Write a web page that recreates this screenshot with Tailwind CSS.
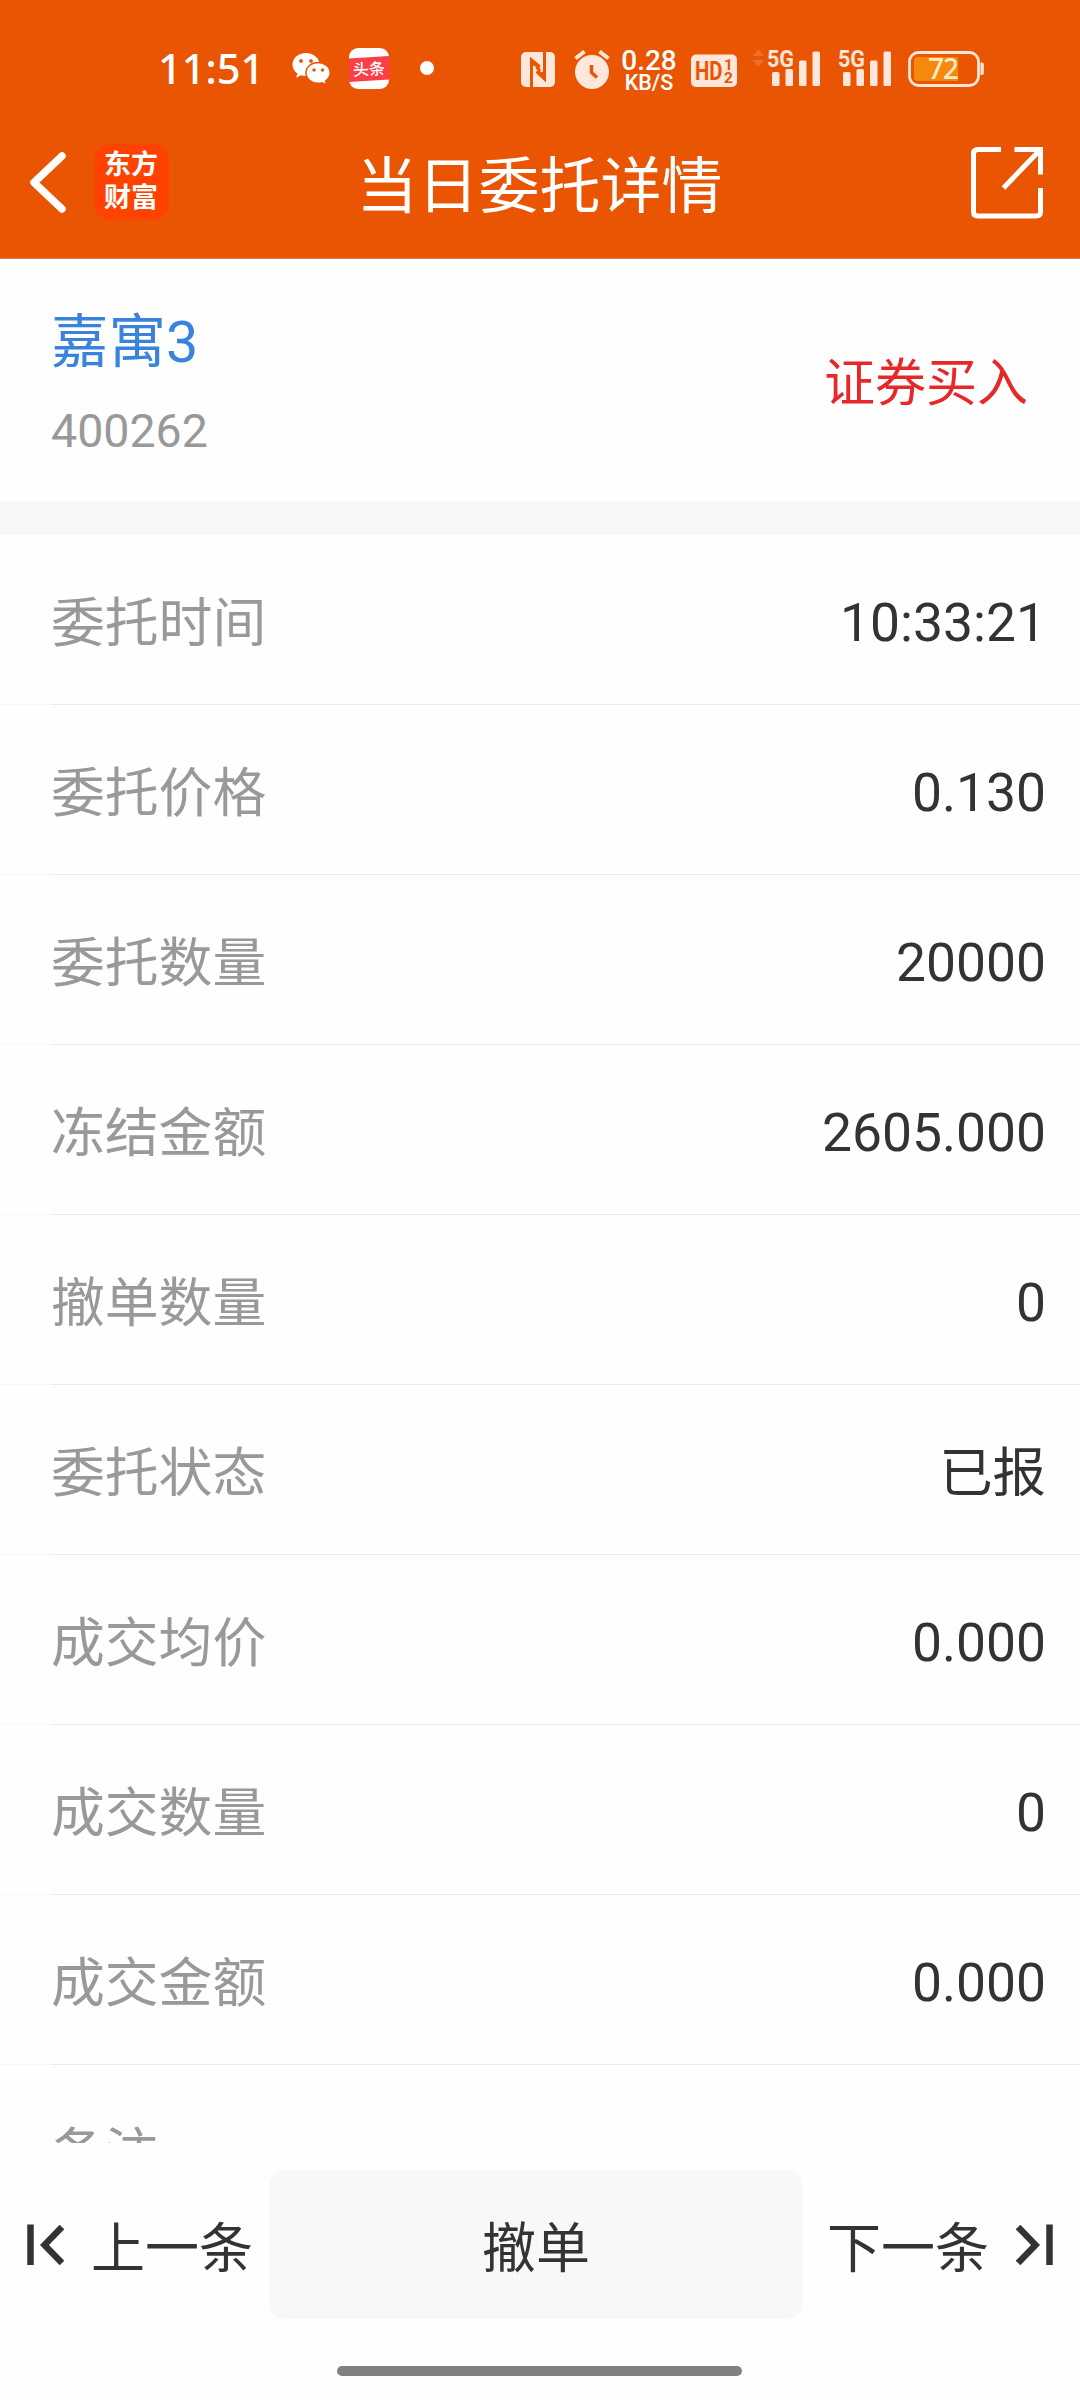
<!DOCTYPE html>
<html lang="zh-CN">
<head>
<meta charset="utf-8">
<title>当日委托详情</title>
<script src="https://cdn.jsdelivr.net/npm/@tailwindcss/browser@4"></script>
</head>
<body class="bg-[#fefefe]">
<div class="flex h-[2400px] w-[1080px] flex-col overflow-hidden bg-[#fefefe] font-[Roboto,'Noto_Sans_CJK_SC',sans-serif] text-[#333]">

  <header class="flex h-[258px] shrink-0 flex-col border-b border-[#c9855a] bg-[#ea5504] box-content">
    <!-- status bar -->
    <div class="flex h-[94px] shrink-0 items-end pl-[158px] text-white">
      <div class="h-12 w-[134px] font-['Noto_Sans',sans-serif] text-[41.5px] leading-[45px] font-medium">11:51</div>
      <svg class="h-12 w-[39px]" viewBox="292 46 39 48">
        <path fill="#fff" d="M306 53c-7.600 0-13.500 5-13.500 11.500 0 3.700 1.900 6.800 4.900 8.900l-1.300 4.400 5-2.500c1.600.5 3.200.7 4.900.7 7.500 0 13.500-5.200 13.500-11.500S313.500 53 306 53z"/>
        <path fill="#fff" stroke="#ea5504" stroke-width="1.500" d="M318 62.500c-6.700 0-12 4.600-12 10.400s5.300 10.400 12 10.400c1.500 0 3-.2 4.300-.6l4.400 2.200-1.100-3.900c2.800-2 4.600-4.800 4.600-8.100 0-5.800-5.500-10.400-12.200-10.400z"/>
        <g fill="#ea5504"><circle cx="301" cy="61" r="1.900"/><circle cx="311" cy="61" r="1.900"/><circle cx="314" cy="70" r="1.700"/><circle cx="322.500" cy="70" r="1.700"/></g>
      </svg>
      <svg class="ml-[18px] h-12 w-10" viewBox="349 46 40 48">
        <rect x="349" y="48" width="40" height="41" rx="9" fill="#fff"/>
        <path fill="#fb3e48" d="M349 58.500l40-2.500v23.500l-40 2.500z"/>
        <text x="369" y="75" font-size="16" font-weight="500" text-anchor="middle" fill="#fff" transform="rotate(-3 369 69)">头条</text>
      </svg>
      <svg class="ml-[31px] h-12 w-3.5" viewBox="420 46 14 48"><circle cx="427" cy="68" r="7" fill="#fff"/></svg>
      <svg class="ml-[87px] h-12 w-[34px]" viewBox="521 46 34 48">
        <rect x="521" y="52" width="34" height="35" rx="5" fill="#fde6da"/>
        <path d="M531.500 87V60l8.500 7M544.500 52v27l-8-7.500" fill="none" stroke="#ea5504" stroke-width="3"/>
        <path d="M531 60l14 17" stroke="#ea5504" stroke-width="3.500"/>
        <path d="M534.500 66v14M541.500 59v13" stroke="#fde6da" stroke-width="2"/>
      </svg>
      <svg class="ml-[19px] h-12 w-9" viewBox="574 46 36 48">
        <circle cx="592" cy="72" r="17" fill="#fde6da"/>
        <path d="M575.500 58.500l9-7M608.500 58.500l-9-7" stroke="#fde6da" stroke-width="4"/>
        <path d="M591.500 65v7.500l5.500 5" fill="none" stroke="#ea5504" stroke-width="3.500"/>
      </svg>
      <!-- network speed -->
      <div class="ml-[9px] flex h-12 w-[60px] flex-col items-center font-medium whitespace-nowrap">
        <span class="h-[26px] text-[28px] leading-[29px]">0.28</span>
        <span class="h-[22px] text-[21.5px] leading-[22px]">KB/S</span>
      </div>
      <svg class="ml-3 h-12 w-[46px]" viewBox="691 46 46 48">
        <rect x="691" y="54.500" width="46" height="32.500" rx="5" fill="#fde6da"/>
        <g fill="#ea5504" font-family="Roboto, sans-serif" font-weight="700">
          <text x="695" y="80" font-size="25.500" textLength="27.500" lengthAdjust="spacingAndGlyphs">HD</text>
          <text x="724" y="70" font-size="15.500">1</text>
          <text x="724" y="83" font-size="15.500">2</text>
        </g>
      </svg>
      <svg class="ml-[15px] h-12 w-[68px]" viewBox="752 46 68 48">
        <path d="M752.500 56l6-6.500 6 6.500zM752.500 60l6 6.500 6-6.500z" fill="#ee6f30"/>
        <g fill="#fde6da">
          <text x="767" y="66.500" font-family="Roboto, sans-serif" font-size="24" font-weight="700" textLength="27" lengthAdjust="spacingAndGlyphs">5G</text>
          <rect x="772" y="72" width="7.500" height="14" rx="1.500"/><rect x="785.500" y="69" width="7.500" height="17" rx="1.500"/><rect x="799" y="60.500" width="7.500" height="25.500" rx="1.500"/><rect x="812.500" y="51.500" width="7.500" height="34.500" rx="1.500"/>
        </g>
      </svg>
      <svg class="ml-[18px] h-12 w-[53px]" viewBox="767 46 53 48">
        <g fill="#fde6da">
          <text x="767" y="66.500" font-family="Roboto, sans-serif" font-size="24" font-weight="700" textLength="27" lengthAdjust="spacingAndGlyphs">5G</text>
          <rect x="772" y="72" width="7.500" height="14" rx="1.500"/><rect x="785.500" y="69" width="7.500" height="17" rx="1.500"/><rect x="799" y="60.500" width="7.500" height="25.500" rx="1.500"/><rect x="812.500" y="51.500" width="7.500" height="34.500" rx="1.500"/>
        </g>
      </svg>
      <svg class="ml-[17px] h-12 w-[76px]" viewBox="908 46 76 48">
        <path d="M918 57h40v24h-40a4 4 0 0 1-4-4V61a4 4 0 0 1 4-4z" fill="#f5890b"/>
        <rect x="909.500" y="52.500" width="69" height="33" rx="9" fill="none" stroke="#fde6da" stroke-width="2.800"/>
        <path d="M980.500 62.500h1.500q1.800 0 1.800 2v8.500q0 2-1.800 2h-1.500z" fill="#fde6da"/>
        <text x="943.500" y="79" font-family="Noto Sans, sans-serif" font-size="28" font-weight="500" text-anchor="middle" fill="#fdeac8" textLength="31">72</text>
      </svg>
    </div>

    <!-- title bar -->
    <div class="flex h-[164px] items-start pt-[50px]">
      <svg class="ml-7 h-[76px] w-10 shrink-0" viewBox="28 144 40 76"><path d="M62 156L34 182.500l28 26.500" fill="none" stroke="#fff" stroke-width="7.500" stroke-linecap="round" stroke-linejoin="round"/></svg>
      <div class="ml-[25.500px] flex h-[76px] w-[75px] shrink-0 flex-col items-center justify-center rounded-2xl bg-[#ff4200] text-[27px] leading-[33px] font-bold text-white"><span>东方</span><span>财富</span></div>
      <h1 class="flex h-[76px] flex-1 items-center pt-3 pl-[188px] text-[61px] whitespace-nowrap text-white">当日委托详情</h1>
      <svg class="mr-9 h-[76px] w-[74px] shrink-0" viewBox="970 144 74 76"><path d="M1001 149.500h-23q-4.500 0-4.500 4v58.500q0 4 4.500 4h58q4.500 0 4.500-4v-24M1014.500 149.500h26v25M1003.500 188l36-37.500" fill="none" stroke="#fff" stroke-width="5"/></svg>
    </div>
  </header>

  <!-- security -->
  <section class="flex h-[242px] shrink-0 items-start justify-between pr-[52px] pl-[51px]">
    <div class="flex flex-col">
      <span class="mt-11 h-20 text-[57.5px] leading-[80px] text-[#3a83dc]">嘉寓3</span>
      <span class="mt-5 h-14 text-[46.500px] leading-[56px] text-[#999]">400262</span>
    </div>
    <span class="mt-[90px] text-[51px] leading-[70px] text-[#e62828]">证券买入</span>
  </section>
  <div class="h-[34px] shrink-0 bg-[#f7f8fa]"></div>

  <!-- order fields, clipped by the action bar -->
  <main id="rows" class="h-[1608px] shrink-0 overflow-hidden"></main>

  <!-- action bar -->
  <footer class="flex h-[257px] shrink-0 flex-col items-center pt-[27px] text-[54px]">
    <div class="flex h-[149px] w-full items-center">
      <button class="flex w-[270px] items-center pl-[26px]">
        <svg class="h-12 w-10 shrink-0" viewBox="26 2220 40 48"><path d="M30.500 2223.500v40.500M62 2226l-17.500 18 17.500 18" fill="none" stroke="#333" stroke-width="6.500"/></svg>
        <span class="ml-[25px] pt-2.5 whitespace-nowrap">上一条</span>
      </button>
      <button class="flex h-full w-[532px] items-center justify-center rounded-[14px] bg-[#f8f8fa] pt-2.5">撤单</button>
      <button class="flex w-[278px] items-center pl-[25px]">
        <span class="pt-2.5 whitespace-nowrap">下一条</span>
        <svg class="ml-[26px] h-12 w-10 shrink-0" viewBox="1015 2220 40 48"><path d="M1049.500 2223.500v40.500M1018 2226l17.500 18-17.500 18" fill="none" stroke="#333" stroke-width="6.500"/></svg>
      </button>
    </div>
    <div class="mt-[47px] mr-0.5 h-2.5 w-[405px] rounded-full bg-[#808080]"></div>
  </footer>
</div>

<script>
  const fields = [
    ['委托时间', '10:33:21'], ['委托价格', '0.130'], ['委托数量', '20000'],
    ['冻结金额', '2605.000'], ['撤单数量', '0'], ['委托状态', '已报'],
    ['成交均价', '0.000'], ['成交数量', '0'], ['成交金额', '0.000'], ['备注', ''],
  ];
  // Latin digits sit slightly higher in the line than the Chinese labels.
  document.getElementById('rows').innerHTML = fields.map(([label, value]) => `
    <div class="flex h-[170px] flex-col">
      <div class="flex h-[169px] items-center justify-between pr-[34px] pl-[51px]">
        <span class="pt-2.5 text-[53.800px] text-[#999]">${label}</span><span class="text-[53.400px] ${/\d/.test(value) ? 'pt-2' : 'pt-2.5'}">${value}</span>
      </div>
      <div class="flex h-px"><div class="w-[51px] bg-[#f7f7f7]"></div><div class="flex-1 bg-[#ebebeb]"></div></div>
    </div>`).join('');
</script>
</body>
</html>
